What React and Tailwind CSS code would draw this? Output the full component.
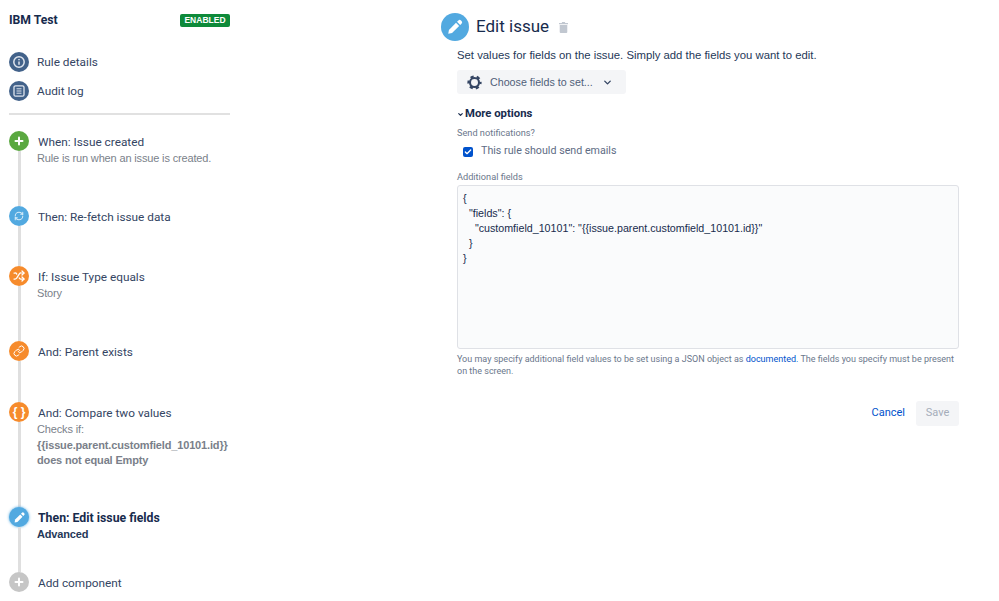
import { Plus, RefreshCw, Shuffle, Link, ChevronDown, Check } from "lucide-react";

const ui = "font-['Roboto',sans-serif]";
const arial = "font-['Liberation_Sans',sans-serif]";

function PencilIcon({ size }) {
  return (
    <svg width={size} height={size} viewBox="0 0 16 16" fill="white">
      <path d="M11 2.2a1.6 1.6 0 0 1 2.3 0l.5.5a1.6 1.6 0 0 1 0 2.3l-1.2 1.2-2.8-2.8z" />
      <path d="M8.9 4.3l2.8 2.8-6.3 6.3-3.4.7.6-3.5z" />
    </svg>
  );
}

function TrashIcon() {
  return (
    <svg width="9" height="11" viewBox="0 0 10 12" fill="#c1c7d0">
      <path d="M3.5 0h3l.5 1h3v1.4H0V1h3z" />
      <path d="M.8 3.2h8.4V11a1 1 0 0 1-1 1H1.800a1 1 0 0 1-1-1z" />
    </svg>
  );
}

function InfoIcon() {
  return (
    <svg width="14" height="14" viewBox="0 0 14 14" fill="none" stroke="#dfe5ee" strokeWidth="1.500">
      <circle cx="7" cy="7" r="5.200" />
      <path d="M7 6.400v3.400M7 4v1.200" />
    </svg>
  );
}

function LogIcon() {
  return (
    <svg width="14" height="14" viewBox="0 0 14 14" fill="none" stroke="#dfe5ee" strokeWidth="1">
      <rect x="2" y="1.800" width="10" height="10.400" rx="1.500" strokeWidth="1.300" />
      <path d="M4.500 4.800h5M4.500 7h5M4.500 9.200h5" />
    </svg>
  );
}

function GearIcon() {
  return (
    <svg width="15" height="15" viewBox="0 0 16 16" fill="none" stroke="#344563">
      <circle cx="8" cy="8" r="4.800" strokeWidth="2.200" />
      <circle cx="8" cy="8" r="6.400" strokeWidth="2.400" strokeDasharray="3.400 3.300" strokeDashoffset="1.700" />
    </svg>
  );
}

const steps = [
  {
    height: "h-[75px]",
    color: "bg-[#5aa840]",
    icon: <Plus size={12} color="white" strokeWidth={4} />,
    title: "When: Issue created",
    sub: ["Rule is run when an issue is created."],
  },
  {
    height: "h-[60px]",
    color: "bg-[#52a9e0]",
    icon: <RefreshCw size={10} color="#d6ebf8" strokeWidth={2.5} />,
    title: "Then: Re-fetch issue data",
  },
  {
    height: "h-[75px]",
    color: "bg-[#f68b2c]",
    icon: <Shuffle size={12} color="white" strokeWidth={2.5} />,
    title: "If: Issue Type equals",
    sub: ["Story"],
  },
  {
    height: "h-[61px]",
    color: "bg-[#f68b2c]",
    icon: <Link size={12} color="white" strokeWidth={2} />,
    title: "And: Parent exists",
  },
  {
    height: "h-[105px]",
    color: "bg-[#f68b2c]",
    icon: <span className={`${arial} text-[12px] font-bold text-white leading-none`}>{"{ }"}</span>,
    title: "And: Compare two values",
    sub: ["Checks if:", "{{issue.parent.customfield_10101.id}}", "does not equal Empty"],
    emphasis: true,
  },
  {
    height: "h-[65px]",
    color: "bg-[#52a9e0]",
    icon: <PencilIcon size={13} />,
    title: "Then: Edit issue fields",
    sub: ["Advanced"],
    active: true,
  },
  {
    height: "h-[20px]",
    color: "bg-[#c6c6c6]",
    icon: <Plus size={12} color="white" strokeWidth={4} />,
    title: "Add component",
    last: true,
  },
];

function Step({ step }) {
  return (
    <div className={`flex ${step.height}`}>
      <div className="flex flex-col items-center w-[20px] shrink-0">
        <div className={`w-[20px] h-[20px] rounded-full flex items-center justify-center shrink-0 ${step.color} ${step.active ? "shadow-[0_0_3px_#52a9e0]" : ""}`}>
          {step.icon}
        </div>
        {!step.last && <div className="w-[3px] flex-1 bg-[#dfdfdf]" />}
      </div>
      <div className="ml-[9px] w-[195px] pt-[1px]">
        <div className={`${ui} leading-[20px] ${step.active ? "text-[12.300px] font-bold text-[#172b4d]" : "text-[11.8px] text-[#344563]"}`}>
          {step.title}
        </div>
        {step.sub && (
          <div className={`${arial} -ml-[1px] -mt-[1px] text-[11px] tracking-[-0.15px] leading-[15.500px] ${step.active ? "font-bold text-[#253858]" : "text-[#7a7f8a]"}`}>
            {step.sub.map((line, i) => (
              <div key={i} className={step.emphasis && i > 0 ? "font-bold" : ""}>{line}</div>
            ))}
          </div>
        )}
      </div>
    </div>
  );
}

export default function App() {
  return (
    <div className="w-[999px] h-[601px] overflow-hidden bg-white flex">
      {/* rule sidebar */}
      <div className="w-[221px] ml-[9px] shrink-0">
        <div className="h-[40px] flex items-center justify-between">
          <span className={`${ui} text-[12.200px] font-bold text-[#172b4d]`}>IBM Test</span>
          <span className={`${arial} h-[13px] w-[50px] text-center rounded-[2px] bg-[#0e8a3a] text-white text-[8.500px] font-bold leading-[13px]`}>ENABLED</span>
        </div>
        <div className="mt-[12px] flex items-center h-[20px]">
          <div className="w-[20px] h-[20px] rounded-full bg-[#42628a] flex items-center justify-center"><InfoIcon /></div>
          <span className={`${ui} ml-[8px] pt-[1px] text-[11.8px] text-[#344563]`}>Rule details</span>
        </div>
        <div className="mt-[9px] flex items-center h-[20px]">
          <div className="w-[20px] h-[20px] rounded-full bg-[#42628a] flex items-center justify-center"><LogIcon /></div>
          <span className={`${ui} ml-[8px] pt-[1px] text-[11.8px] text-[#344563]`}>Audit log</span>
        </div>
        <div className="mt-[12px] h-[2px] bg-[#e1e1e1]" />
        <div className="mt-[16px]">
          {steps.map((step) => (
            <Step key={step.title} step={step} />
          ))}
        </div>
      </div>

      {/* component editor */}
      <div className="ml-[211px] w-[518px] shrink-0">
        <div className="mt-[13px] flex items-center h-[28px]">
          <div className="w-[28px] h-[28px] rounded-full bg-[#52a9e0] flex items-center justify-center"><PencilIcon size={18} /></div>
          <span className={`${ui} ml-[7px] text-[17px] text-[#172b4d]`}>Edit issue</span>
          <span className="ml-[10px] flex"><TrashIcon /></span>
        </div>
        <div className="ml-[16px]">
          <p className={`${arial} mt-[6px] text-[11.340px] leading-[16px] text-[#253858]`}>
            Set values for fields on the issue. Simply add the fields you want to edit.
          </p>
          <div className="mt-[7px] w-[169px] h-[24px] rounded-[3px] bg-[#f4f5f7] flex items-center pl-[10px]">
            <GearIcon />
            <span className={`${arial} ml-[8px] text-[10.700px] text-[#505f79]`}>Choose fields to set...</span>
            <ChevronDown size={11} color="#344563" strokeWidth={3} className="ml-[9px]" />
          </div>
          <div className="mt-[12px] flex items-center h-[16px]">
            <ChevronDown size={7} color="#172b4d" strokeWidth={4} />
            <span className={`${ui} ml-[1px] text-[11.300px] font-bold text-[#172b4d]`}>More options</span>
          </div>
          <div className={`${ui} mt-[4px] text-[9.200px] leading-[14px] text-[#6b778c]`}>Send notifications?</div>
          <div className="mt-[3px] flex items-center h-[16px]">
            <div className="ml-[6px] w-[10px] h-[10px] rounded-[2px] bg-[#0052cc] flex items-center justify-center mt-[1px]">
              <Check size={8} color="white" strokeWidth={4} />
            </div>
            <span className={`${ui} ml-[8px] text-[10.700px] text-[#5e6c84]`}>This rule should send emails</span>
          </div>
          <div className={`${ui} mt-[11px] text-[9.200px] leading-[14px] text-[#6b778c]`}>Additional fields</div>
          <div className={`${arial} mt-[1px] h-[164px] rounded-[3px] border border-[#dfe1e6] bg-[#fafbfc] pl-[5px] pt-[5px] text-[10.700px] leading-[15px] text-[#172b4d] whitespace-pre`}>
            {'{\n  "fields": {\n    "customfield_10101": "{{issue.parent.customfield_10101.id}}"\n  }\n}'}
          </div>
          <p className={`${ui} mt-[4px] text-[9px] leading-[12px] text-[#6b778c]`}>
            You may specify additional field values to be set using a JSON object as <span className="text-[#0052cc]">documented.</span> The fields you specify must be present on the screen.
          </p>
          <div className="mt-[24px] flex items-center justify-end">
            <span className={`${ui} text-[11px] text-[#0052cc]`}>Cancel</span>
            <div className={`${ui} ml-[11px] w-[43px] h-[25px] rounded-[3px] bg-[#f4f5f7] text-[11px] text-[#a5adba] flex items-center justify-center`}>Save</div>
          </div>
        </div>
      </div>
    </div>
  );
}
